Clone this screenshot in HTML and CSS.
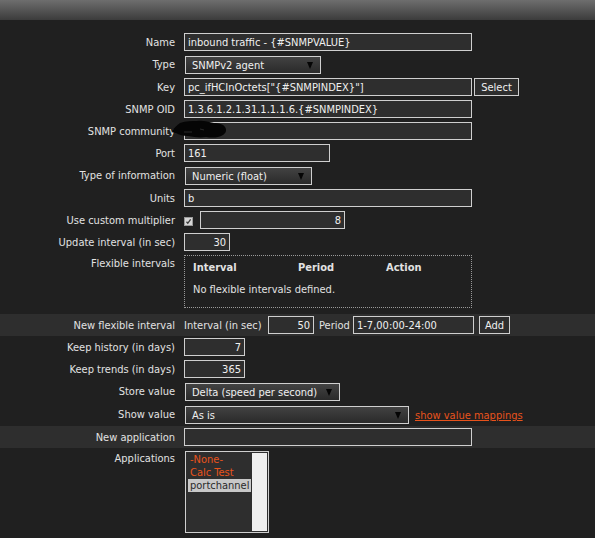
FILE: index.html
```html
<!DOCTYPE html>
<html>
<head>
<meta charset="utf-8">
<link rel="stylesheet" href="styles.css">
</head>
<body>
<div class="header"></div>
<div class="form">
  <div class="row">
    <div class="label">Name</div>
    <div class="field"><input class="inp w288" value="inbound traffic - {#SNMPVALUE}"></div>
  </div>
  <div class="row sel">
    <div class="label">Type</div>
    <div class="field"><div class="select w136"><span>SNMPv2 agent</span><i class="arrow"></i></div></div>
  </div>
  <div class="row">
    <div class="label">Key</div>
    <div class="field"><input class="inp w288" value="pc_ifHCInOctets[&quot;{#SNMPINDEX}&quot;]"><button class="btn w45">Select</button></div>
  </div>
  <div class="row">
    <div class="label">SNMP OID</div>
    <div class="field"><input class="inp w288" value="1.3.6.1.2.1.31.1.1.1.6.{#SNMPINDEX}"></div>
  </div>
  <div class="row community">
    <div class="label">SNMP community</div>
    <div class="field"><input class="inp w288" value=""></div>
    <svg class="scribble" width="58" height="20" viewBox="0 0 58 20">
      <path d="M2 11 C4 8 7 5 10 3 C16 1 22 1 27 1 C33 0 38 2 44 3 C49 3 53 4 55 7 C57 10 56 13 53 15 C48 18 42 18 36 17 C30 18 24 17 18 16 C13 16 9 15 6 13 C4 13 2 12 2 11 Z" fill="#050505"/>
      <path d="M14 12 L22 12 M30 9 L34 10" stroke="#2a2a2a" stroke-width="1"/>
    </svg>
  </div>
  <div class="row">
    <div class="label">Port</div>
    <div class="field"><input class="inp w146" value="161"></div>
  </div>
  <div class="row sel">
    <div class="label">Type of information</div>
    <div class="field"><div class="select w127"><span>Numeric (float)</span><i class="arrow"></i></div></div>
  </div>
  <div class="row">
    <div class="label">Units</div>
    <div class="field"><input class="inp w288" value="b"></div>
  </div>
  <div class="row">
    <div class="label">Use custom multiplier</div>
    <div class="field">
      <svg class="check" width="9" height="9" viewBox="0 0 9 9"><rect x="0.5" y="0.5" width="8" height="8" fill="#d6d6d6" stroke="#9a9a9a"/><path d="M2.5 4.8 L3.8 6.3 L6.6 2.4" stroke="#3a3a3a" stroke-width="1.3" fill="none"/></svg>
      <input class="inp w145 right mult" value="8">
    </div>
  </div>
  <div class="row">
    <div class="label">Update interval (in sec)</div>
    <div class="field"><input class="inp w46 right" value="30"></div>
  </div>
  <div class="row flex">
    <div class="label">Flexible intervals</div>
    <div class="field">
      <div class="flexbox">
        <div class="fhead"><span class="c1">Interval</span><span class="c2">Period</span><span>Action</span></div>
        <div class="fbody">No flexible intervals defined.</div>
      </div>
    </div>
  </div>
  <div class="row shaded">
    <div class="label">New flexible interval</div>
    <div class="field">
      <span class="tl t1">Interval (in sec)</span>
      <input class="inp w46 right" value="50">
      <span class="tl t2">Period</span>
      <input class="inp w121" value="1-7,00:00-24:00">
      <button class="btn w31 addbtn">Add</button>
    </div>
  </div>
  <div class="row">
    <div class="label">Keep history (in days)</div>
    <div class="field"><input class="inp w61 right" value="7"></div>
  </div>
  <div class="row">
    <div class="label">Keep trends (in days)</div>
    <div class="field"><input class="inp w61 right" value="365"></div>
  </div>
  <div class="row sel">
    <div class="label">Store value</div>
    <div class="field"><div class="select w155"><span>Delta (speed per second)</span><i class="arrow"></i></div></div>
  </div>
  <div class="row sel">
    <div class="label">Show value</div>
    <div class="field"><div class="select w224"><span>As is</span><i class="arrow"></i></div><a class="link" href="#">show value mappings</a></div>
  </div>
  <div class="row shaded">
    <div class="label">New application</div>
    <div class="field"><input class="inp w288" value=""></div>
  </div>
  <div class="row apps">
    <div class="label">Applications</div>
    <div class="field">
      <div class="listbox">
        <div class="items">
          <div class="item orange">-None-</div>
          <div class="item orange">Calc Test</div>
          <div class="item selected">portchannel</div>
        </div>
        <div class="scroll"></div>
      </div>
    </div>
  </div>
</div>
</body>
</html>
```

FILE: styles.css
```css
body {
  margin: 0;
  background: #202020;
  color: #e2e2e2;
  font-family: "DejaVu Sans Condensed", "DejaVu Sans", sans-serif;
  font-stretch: condensed;
  font-size: 11px;
}
.header {
  height: 20px;
  background: linear-gradient(#6e6e6e, #3c3c3c);
}
.form {
  padding-top: 11px;
}
.row {
  display: grid;
  grid-template-columns: 184px 1fr;
  height: 22px;
  align-items: center;
  position: relative;
}
.row.sel {
  height: 23px;
}
.row.sel .field {
  padding-top: 1px;
}
.label {
  text-align: right;
  padding-right: 9px;
  white-space: nowrap;
}
.field {
  display: flex;
  align-items: center;
}
.inp {
  box-sizing: border-box;
  height: 18px;
  margin: 0;
  border: 1px solid #cfcfcf;
  background: #2e2e2e;
  color: #f0f0f0;
  font: inherit;
  padding: 0 3px;
  outline: none;
}
.right { text-align: right; }
.w288 { width: 288px; }
.w146 { width: 146px; }
.w145 { width: 145px; }
.w46 { width: 46px; }
.w61 { width: 61px; }
.w121 { width: 121px; }
.w136 { width: 136px; }
.w127 { width: 127px; }
.w155 { width: 155px; }
.w224 { width: 224px; }
.w45 { width: 45px; }
.w31 { width: 31px; }
.btn {
  box-sizing: border-box;
  height: 18px;
  margin: 0 0 0 2px;
  padding: 0;
  border: 1px solid #cfcfcf;
  background: #2e2e2e;
  color: #f0f0f0;
  font: inherit;
}
.select {
  box-sizing: border-box;
  height: 18px;
  margin-left: 1px;
  border: 1px solid #cfcfcf;
  background: linear-gradient(#424242, #2a2a2a);
  color: #f0f0f0;
  display: flex;
  align-items: center;
  justify-content: space-between;
  padding: 0 7px 0 6px;
  white-space: nowrap;
  overflow: hidden;
}
.arrow {
  width: 0;
  height: 0;
  border-left: 3px solid transparent;
  border-right: 3px solid transparent;
  border-top: 7px solid #050505;
  flex: none;
}
.community .scribble {
  position: absolute;
  left: 170px;
  top: 0;
}
.check {
  display: block;
  margin-top: 2px;
  margin-right: 7px;
}
.row.flex {
  height: 61px;
  align-items: start;
}
.row.flex .label {
  line-height: 22px;
}
.row.flex .field {
  padding-top: 2px;
}
.flexbox {
  box-sizing: border-box;
  width: 288px;
  height: 53px;
  border: 1px dotted #9a9a9a;
  padding: 5px 8px 0;
}
.fhead {
  font-weight: bold;
  line-height: 14px;
  display: flex;
}
.c1 { width: 105px; }
.c2 { width: 88px; }
.fbody {
  line-height: 14px;
  margin-top: 8px;
}
.shaded {
  background: #2e2e2e;
}
.tl {
  white-space: nowrap;
}
.t1 { width: 84px; }
.t2 { width: 34px; padding-left: 5px; }
.addbtn { margin-left: 5px; }
.link {
  color: #e8531c;
  margin-left: 6px;
  white-space: nowrap;
}
.row.apps {
  height: auto;
  align-items: start;
}
.row.apps .label {
  line-height: 22px;
}
.row.apps .field {
  padding-top: 3px;
}
.listbox {
  box-sizing: border-box;
  margin-left: 1px;
  width: 84px;
  height: 82px;
  border: 1px solid #cfcfcf;
  background: #2e2e2e;
  display: flex;
}
.items {
  flex: 1;
  padding: 1px 0 0 2px;
}
.item {
  line-height: 13px;
  padding-left: 2px;
  white-space: nowrap;
}
.item.orange {
  color: #e8531c;
}
.item.selected {
  background: #c8c8c8;
  color: #2a2a2a;
}
.scroll {
  width: 15px;
  background: #efefef;
  border-left: 1px solid #2e2e2e;
  margin: 1px 1px 1px 0;
}
```
